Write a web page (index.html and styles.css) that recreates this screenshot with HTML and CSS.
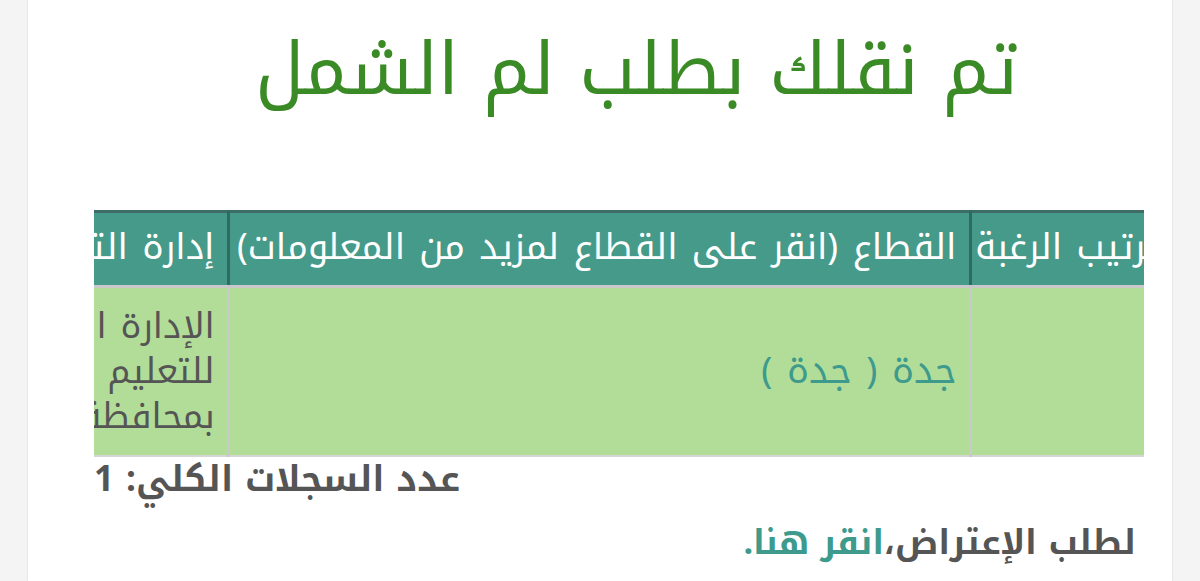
FILE: index.html
```html
<!DOCTYPE html>
<html lang="ar" dir="rtl">
<head>
<meta charset="utf-8">
<link rel="stylesheet" href="styles.css">
</head>
<body>
<div class="page">
  <div class="card">
    <h1 class="title">تم نقلك بطلب لم الشمل</h1>
    <div class="table-wrap">
      <table class="grid">
        <colgroup>
          <col class="col-rank">
          <col class="col-sector">
          <col class="col-admin">
        </colgroup>
        <thead>
          <tr>
            <th>ترتيب الرغبة</th>
            <th>القطاع (انقر على القطاع لمزيد من المعلومات)</th>
            <th>إدارة التعليم</th>
          </tr>
        </thead>
        <tbody>
          <tr>
            <td></td>
            <td><a class="link sector-link" href="#">جدة ( جدة )</a></td>
            <td>الإدارة العامة للتعليم بمحافظة جدة</td>
          </tr>
        </tbody>
      </table>
    </div>
    <div class="count">عدد السجلات الكلي: 1</div>
    <p class="objection">لطلب الإعتراض،<a class="link" href="#">انقر هنا.</a></p>
  </div>
</div>
</body>
</html>
```
FILE: styles.css
```css
html, body {
  margin: 0;
  padding: 0;
  background: #f4f4f4;
  height: 100%;
}
.page {
  padding: 0 28px;
  height: 100%;
  box-sizing: border-box;
}
.card {
  background: #ffffff;
  height: 100%;
  box-shadow: 0 0 2px rgba(0,0,0,0.15);
  padding: 0 28px 0 66px;
  overflow: hidden;
  font-family: "Noto Kufi Arabic", "Droid Arabic Kufi", "Noto Sans Arabic", "DejaVu Sans", sans-serif;
}
.title {
  margin: 0;
  padding: 24px 0 0 36px;
  height: 210px;
  box-sizing: border-box;
  font-size: 72px;
  font-weight: normal;
  color: #3a8a26;
  text-align: center;
  line-height: 92px;
}
.table-wrap {
  overflow: hidden;
}
.grid {
  border-collapse: collapse;
  margin-right: -28px;
  width: 1200px;
  table-layout: fixed;
  font-size: 35px;
  word-spacing: 2px;
}
.col-rank { width: 202px; }
.col-sector { width: 742px; }
.col-admin { width: 256px; }
.grid th {
  background: #459a8a;
  color: #ffffff;
  font-weight: normal;
  font-size: 36px;
  height: 68px;
  padding: 0 12px 4px 12px;
  text-align: right;
  white-space: nowrap;
  border-top: 3px solid #3d6d66;
  border-left: 3px solid #2f6b60;
  border-bottom: 3px solid #c9c9c9;
}
.grid td {
  background: #b1dd98;
  color: #555555;
  height: 167px;
  padding: 0 12px;
  text-align: right;
  vertical-align: middle;
  line-height: 45px;
  border-left: 3px solid #c9c9c9;
  border-bottom: 2px solid #d6d6d6;
}
.link {
  color: #3d9a8c;
  text-decoration: none;
}
.sector-link {
  font-size: 37px;
}
.count {
  text-align: left;
  font-size: 35px;
  font-weight: bold;
  color: #555555;
  margin-top: 2px;
  line-height: 42px;
}
.objection {
  margin: 20px 8px 0 0;
  font-size: 34px;
  font-weight: bold;
  color: #555555;
  line-height: 44px;
}
```
